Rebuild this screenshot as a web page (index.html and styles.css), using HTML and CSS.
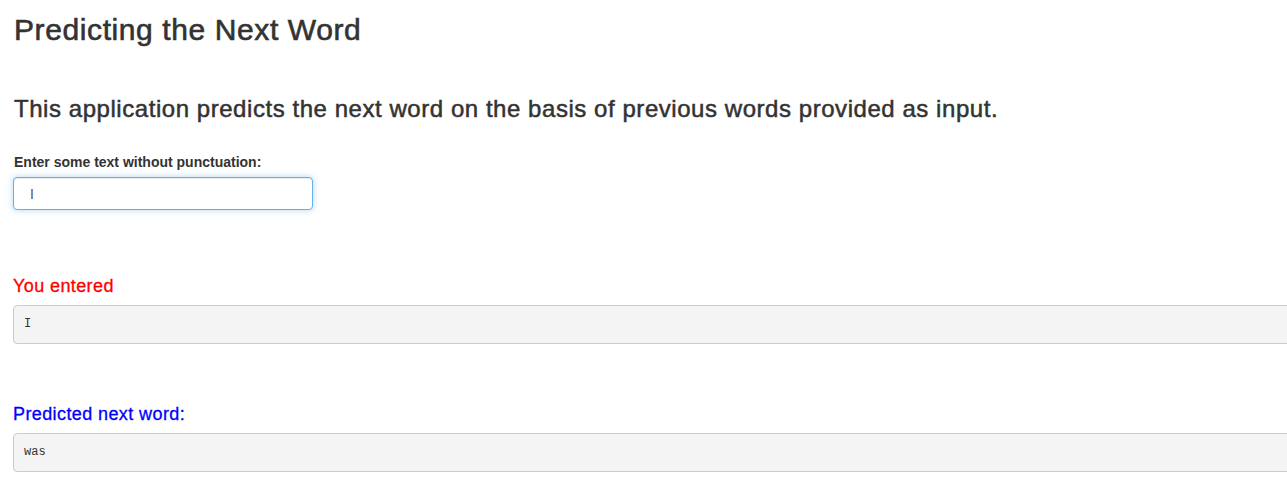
FILE: index.html
```html
<!DOCTYPE html>
<html>
<head>
<meta charset="utf-8">
<link rel="stylesheet" href="styles.css">
</head>
<body>
<div class="page">
  <h2 class="title">Predicting the Next Word</h2>
  <h3 class="subtitle">This application predicts the next word on the basis of previous words provided as input.</h3>
  <div class="form-group">
    <label class="label" for="txt">Enter some text without punctuation:</label>
    <input id="txt" class="text-input" type="text" value="I">
  </div>
  <h4 class="out-label red">You entered</h4>
  <pre class="out">I</pre>
  <h4 class="out-label blue">Predicted next word:</h4>
  <pre class="out">was</pre>
</div>
</body>
</html>
```
FILE: styles.css
```css
html, body {
  margin: 0;
  padding: 0;
  background: #fff;
  overflow: hidden;
}
body {
  font-family: "Liberation Sans", Arial, sans-serif;
  color: #333;
  font-size: 14px;
  line-height: 1.42857;
}
.page {
  padding: 0 15px;
}
.title {
  font-size: 30px;
  font-weight: normal;
  line-height: 33px;
  margin: 13px 0 0 -1px;
  letter-spacing: 0.6px;
  -webkit-text-stroke: 0.6px #333;
}
.subtitle {
  font-size: 24px;
  font-weight: normal;
  line-height: 26px;
  margin: 50px 0 0 -1px;
  letter-spacing: 0.55px;
  -webkit-text-stroke: 0.5px #333;
}
.form-group {
  margin-top: 30px;
}
.label {
  display: block;
  font-weight: bold;
  font-size: 14px;
  line-height: 20px;
  margin-bottom: 5px;
  margin-left: -1px;
}
.text-input {
  display: block;
  box-sizing: border-box;
  width: 300px;
  height: 33px;
  padding: 6px 16px;
  font-family: "Liberation Sans", Arial, sans-serif;
  font-size: 14px;
  color: #555;
  border: 1px solid #66afe9;
  border-radius: 4px;
  outline: none;
  box-shadow: inset 0 1px 1px rgba(0,0,0,.075), 0 0 6px rgba(102,175,233,.5);
  margin-left: -2px;
}
.out-label {
  font-size: 18px;
  font-weight: normal;
  line-height: 20px;
  margin: 66px 0 9px -2px;
  letter-spacing: 0.4px;
  -webkit-text-stroke: 0.3px currentColor;
}
.out-label.red { color: #f00; }
.out-label.blue { color: #00f; }
.out + .out-label { margin-top: 60px; }
.out {
  box-sizing: border-box;
  width: 1300px;
  height: 39px;
  margin: 0 0 0 -2px;
  padding: 9px 10px;
  font-family: "Liberation Mono", monospace;
  font-size: 12px;
  line-height: 19px;
  color: #333;
  background: #f4f4f4;
  border: 1px solid #ccc;
  border-radius: 4px;
}
```
